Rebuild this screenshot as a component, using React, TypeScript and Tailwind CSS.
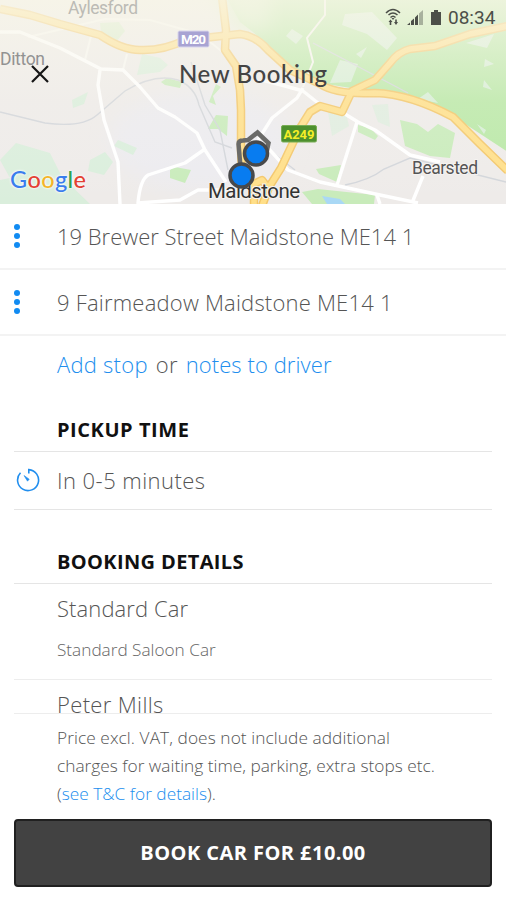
import React from 'react';

const minor = [
  'M0 32 L20 32 L60 48 L101 69 L123 70 L140 87 L158 108 L175 117 L197 133 L205 150 L226 182',
  'M100 70 L98 85 L104 120 L118 162 L120 204',
  'M205 149 L185 163 L148 175 Q140 180 138 203 L180 200 L198 190 L226 190',
  'M303 88 L297 98 L272 118 L258 140',
  'M262 80 L285 86 L303 91 L318 103',
  'M345 114 L358 122 L375 130 L410 155 L440 162',
  'M357 122 L337 185',
  'M268 148 L288 170 L320 182 L380 195 L418 203',
  'M423 176 L412 203',
  'M377 195 L380 204',
];
const faint = ['M325 0 L325 15 L307 38 L313 62 L303 87', 'M91 36 L85 60', 'M127 54 L123 70', 'M28 37 L105 19 L150 20 L200 34 L225 54'];
const major = [
  'M0 9 L30 15 L60 24 L100 35 Q122 50 140 50 Q163 51 185 40 L240 34 Q256 36 268 50 L290 70 L320 84 Q337 95 375 93 Q410 94 453 117 L480 144 L508 171',
  'M222 -3 L226 30 L225 50 L236 66 L240 90 L241 110 L241 150 L242 172',
  'M508 26 L470 34 L435 46 L410 49 Q398 52 390 63 L375 80 L352 91 L342 112 L320 106 L310 112 L300 128 L281 168 L269 187 L262 206',
  'M254 206 L254 184 L262 180 L268 188',
];

function MapView() {
  return (
    <svg className="block h-[204px] w-full" viewBox="0 0 506 204" preserveAspectRatio="none">
      <defs>
        <linearGradient id="fade" x1="0" y1="0" x2="0" y2="1">
          <stop offset="0" stopColor="#f8f6e8" stopOpacity=".82" />
          <stop offset=".5" stopColor="#f8f6ee" stopOpacity=".2" />
          <stop offset="1" stopColor="#ffffff" stopOpacity="0" />
        </linearGradient>
        <filter id="soft" x="-20%" y="-20%" width="140%" height="140%"><feGaussianBlur stdDeviation="9" /></filter>
      </defs>
      <rect width="506" height="204" fill="#eeebe9" />
      <ellipse cx="200" cy="140" rx="90" ry="50" fill="#ecebef" filter="url(#soft)" />
      <path d="M225 -5 L240 22 L253 32 L270 48 L290 68 L320 83 L375 92 L430 103 L453 116 L508 152 V-5Z" fill="#b9e8a6" />
      <path d="M205 -20 H270 V30 H240Z" fill="#d5eec5" filter="url(#soft)" />
      <g fill="#daeedc">
        <path d="M16 143 L50 153 L62 177 L90 204 H0 V180 L10 178 L0 160Z" />
        <path d="M90 160 L105 152 L113 162 L104 175 L88 171Z M118 140 L137 148 L133 155 L114 146Z M142 54 L160 58 L168 65 L160 72 L137 75Z M72 100 L88 92 L84 104 L73 108Z" />
        <path d="M328 112 L345 109 L349 126 L332 136Z M372 105 L388 104 L390 127 L378 122Z" opacity=".7" />
        <path d="M340 60 L358 64 L351 82 L330 83Z M356 54 L367 47 L361 58Z M345 14 L372 12 L397 38 L387 50 L367 34 L342 25Z M292 29 L303 36 L296 44 L286 36Z M466 43 L494 34 L487 48Z M485 59 L494 64 L484 67Z M484 80 L492 90 L483 87Z M418 99 L428 92 L438 103Z M477 124 L486 130 L484 134Z" opacity=".9" />
      </g>
      <g fill="#c8ebba">
        <path d="M100 23 L119 22 L125 31 L116 42 L101 32Z" opacity=".6" />
        <path d="M161 82 L167 78 L182 82 L180 88 L165 85Z M216 84 L221 87 L213 96 L216 105 L209 102Z M216 115 L228 116 L227 136 L218 129 L208 129Z M170 170 L175 167 L191 170 L185 183 L170 178Z" />
        <path d="M400 120 L417 124 L428 132 L438 124 L455 133 L450 158 L430 156 L405 146Z M358 125 L370 128 L378 136 L375 140 L358 132Z M316 169 L341 165 L337 182 L319 174Z M318 189 L375 195 L374 204 H312 L302 192Z" />
      </g>
      <path d="M322 196 L340 199 L345 204 H327Z" fill="#a9d8f5" />
      <g fill="none" stroke="#d2d5da" strokeWidth="1.4">
        <path d="M0 112 L45 123 Q82 128 97 115 L125 91 Q155 73 178 80 Q195 87 199 105 L215 142 L232 148" />
        <path d="M191 62 L205 105 L220 130 L228 170 M313 43 L355 65 L408 93 M345 185 Q370 180 384 169 L410 158 L506 182 M265 147 L295 170" />
      </g>
      <g fill="none" stroke="#f8f7f3" strokeWidth="2">{faint.map((d) => <path key={d} d={d} />)}</g>
      <g fill="none" stroke="#ffffff" strokeWidth="3.4" strokeLinejoin="round">{minor.map((d) => <path key={d} d={d} />)}</g>
      <g fill="none" stroke="#f3c668" strokeWidth="8.5" strokeLinejoin="round">{major.map((d) => <path key={d} d={d} />)}</g>
      <g fill="none" stroke="#ffdf88" strokeWidth="5.5" strokeLinejoin="round">{major.map((d) => <path key={d} d={d} />)}</g>
      <rect width="506" height="204" fill="url(#fade)" />
      <rect x="178" y="31" width="31" height="16" rx="1.5" fill="#a8a3d3" stroke="#d9d6ec" />
      <rect x="281.5" y="125.5" width="35" height="16.5" rx="1.5" fill="#4d902e" stroke="#79ad54" />
      <path d="M241 173 L238.500 144 Q238.500 140.500 243 140.500 L248 140 L257.500 132.500 L268.500 143 L266 155" fill="none" stroke="#6a6a68" strokeWidth="4.500" />
      <g style={{ fontFamily: 'Roboto, sans-serif' }}>
        <text x="68" y="13.500" fontSize="17.500" fill="#bcbbb5" textLength="70">Aylesford</text>
        <text x="0" y="64.500" fontSize="17.500" fill="#929292" textLength="45">Ditton</text>
        <text x="181" y="44" fontSize="13.500" fontWeight="700" fill="#fff" textLength="25">M20</text>
        <text x="283.500" y="138.500" fontSize="13" fontWeight="700" fill="#f5ee27" textLength="31">A249</text>
        <text x="412" y="174" fontSize="17.500" fill="#555" stroke="#f5f3f1" strokeWidth="2" paintOrder="stroke" textLength="66">Bearsted</text>
        <text x="208" y="197.500" fontSize="20.500" fill="#333" stroke="#f5f3f1" strokeWidth="2" paintOrder="stroke" textLength="92">Maidstone</text>
      </g>
      <circle cx="256" cy="153.500" r="11.500" fill="#087cf0" stroke="#48494b" strokeWidth="3.500" />
      <circle cx="241.500" cy="175.500" r="11.500" fill="#087cf0" stroke="#48494b" strokeWidth="3.500" />
    </svg>
  );
}

function StatusBar() {
  return (
    <div className="absolute top-[9px] right-[12px] flex h-[18px] items-center text-[#4c4f49]">
      <svg width="60" height="20" viewBox="385 8 60 20" fill="currentColor">
        <g fill="none" stroke="currentColor" strokeWidth="1.500">
          <path d="M386 13 Q393 6 400 13 M388.500 15 Q393 11 397.500 15 M390.500 17.500 Q393 15 395.500 17.500" />
        </g>
        <path d="M391.500 18 L393 20 L394.500 18Z M388.500 22 L390.500 19.500 L392.500 22 H391.300 V25 H389.700 V22Z M394 22 H395.200 V19.500 H396.800 V22 H398 L396 25Z" />
        <path d="M407 25 L410 22.500 V25Z M411 25 V21 L414 18.500 V25Z M415 25 V17.500 L418 14.500 V25Z" />
        <path d="M419 25 V13.500 L423 10 V25Z" opacity=".4" />
        <path d="M431 12 H434 V10 H438 V12 H441 V25 H431Z" />
      </svg>
      <span className="w-[49px] whitespace-nowrap pl-[3px] font-['Roboto',sans-serif] text-[19px] leading-[18px] font-normal">08:34</span>
    </div>
  );
}

function Dots() {
  return (
    <span className="flex w-[57px] shrink-0 flex-col gap-[3px] pl-[14px]">
      <i className="size-[6px] rounded-full bg-[#118bf2]" />
      <i className="size-[6px] rounded-full bg-[#118bf2]" />
      <i className="size-[6px] rounded-full bg-[#118bf2]" />
    </span>
  );
}

function Google() {
  return (
    <div className="absolute top-[165px] left-[10px] font-['Lato',sans-serif] text-[23.500px] leading-[28px] font-medium tracking-[0.4px] [text-shadow:0_0_2px_#fff,0_0_3px_#fff]">
      <span className="text-[#3b7ded]">G</span><span className="text-[#e34133]">o</span><span className="text-[#f3b52a]">o</span><span className="text-[#3b7ded]">g</span><span className="text-[#31a350]">l</span><span className="text-[#e34133]">e</span>
    </div>
  );
}

export default function App() {
  return (
    <main className="flex h-[900px] w-[506px] flex-col overflow-hidden bg-white font-['Open_Sans','Noto_Sans',sans-serif] font-light text-[#555]">
      <header className="relative h-[204px] shrink-0 font-normal">
        <MapView />
        <StatusBar />
        <svg className="absolute top-[65px] left-[31px]" width="18" height="18" viewBox="0 0 18 18" stroke="#151515" strokeWidth="2.2"><path d="M1 1 L17 17 M17 1 L1 17" /></svg>
        <h1 className="absolute top-[60px] left-[179px] whitespace-nowrap font-['Lato',sans-serif] text-[24px] leading-[28px] font-medium tracking-[0.6px] text-[#444]">New Booking</h1>
        <Google />
      </header>

      <section className="flex h-[66px] shrink-0 items-center border-b-2 border-[#f3f3f3] text-[22px]">
        <Dots /><span className="whitespace-nowrap">19 Brewer Street Maidstone ME14 1</span>
      </section>
      <section className="flex h-[66px] shrink-0 items-center border-b-2 border-[#f3f3f3] text-[22px]">
        <Dots /><span className="whitespace-nowrap tracking-[0.2px]">9 Fairmeadow Maidstone ME14 1</span>
      </section>
      <p className="flex h-[59px] shrink-0 items-center gap-[8px] pb-[2px] pl-[57px] text-[22px] tracking-[0.25px] whitespace-nowrap">
        <a className="text-[#218eee]">Add stop</a><span>or</span><a className="tracking-[0.08px] text-[#218eee]">notes to driver</a>
      </p>

      <section className="mx-[14px] flex h-[57px] shrink-0 items-end border-b border-[#e5e5e5] pb-[7px] pl-[43px]">
        <h2 className="text-[20px] leading-[28px] font-bold tracking-[0.55px] text-[#111]">PICKUP TIME</h2>
      </section>
      <section className="mx-[14px] flex h-[58px] shrink-0 items-center border-b border-[#e5e5e5] pb-[1px] text-[22px]">
        <svg className="mr-[17px] ml-[2px] shrink-0" width="24" height="24" viewBox="0 0 24 24" fill="none" stroke="#218eee" strokeWidth="1.600">
          <path d="M12.800 5.500 V1.600 A10.500 10.500 0 1 1 4.500 4.800" />
          <path d="M8 7.500 L13.200 11.200 L11.500 13.200Z" fill="#218eee" strokeWidth=".6" />
        </svg>
        <span className="tracking-[0.45px]">In 0-5 minutes</span>
      </section>

      <section className="mx-[14px] flex h-[74px] shrink-0 items-end border-b border-[#e5e5e5] pb-[7px] pl-[43px]">
        <h2 className="text-[20px] leading-[28px] font-bold tracking-[0.36px] text-[#111]">BOOKING DETAILS</h2>
      </section>
      <section className="mx-[14px] h-[96px] shrink-0 border-b border-[#ededed] pt-[8px] pl-[43px]">
        <h3 className="text-[22px] leading-[32px] tracking-[0.1px]">Standard Car</h3>
        <p className="mt-[13px] text-[17.200px] leading-[26px] text-[#666]">Standard Saloon Car</p>
      </section>
      <section className="mx-[14px] h-[34px] shrink-0 overflow-hidden border-b border-[#ededed] pt-[8px] pl-[43px]">
        <h3 className="text-[22px] leading-[32px] tracking-[0.35px]">Peter Mills</h3>
      </section>
      <p className="h-[105px] shrink-0 pt-[10px] pl-[57px] text-[17.300px] leading-[28px] whitespace-nowrap">
        <span className="block tracking-[0.07px]">Price excl. VAT, does not include additional</span>
        <span className="block">charges for waiting time, parking, extra stops etc.</span>
        <span className="block">(<a className="text-[#218eee]">see T&amp;C for details</a>).</span>
      </p>
      <button className="mx-[14px] h-[68px] shrink-0 rounded-[4px] border-2 border-[#202020] bg-[#424242] text-[20px] font-bold tracking-[0.45px] text-white">BOOK CAR FOR £10.00</button>
    </main>
  );
}
